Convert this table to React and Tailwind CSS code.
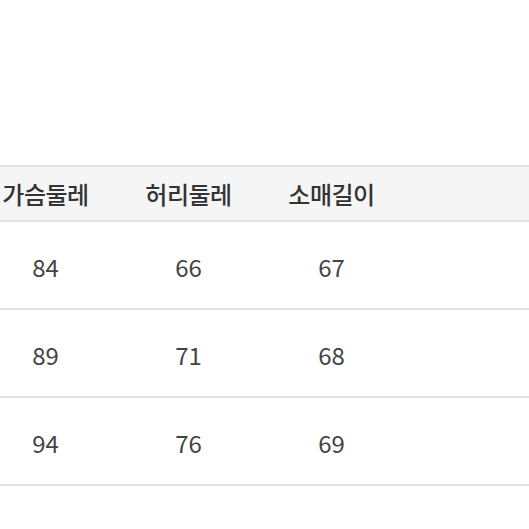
const headers = ['가슴둘레', '허리둘레', '소매길이', ''];
const rows = [
  ['84', '66', '67', ''],
  ['89', '71', '68', ''],
  ['94', '76', '69', ''],
];

export default function App() {
  return (
    <div className="w-[529px] h-[529px] overflow-hidden bg-white font-['Noto_Sans_CJK_KR',sans-serif]">
      <div className="pt-[165px] -ml-[26px] w-[600px]">
        {/* Header */}
        <div className="grid grid-cols-[143px_143px_143px_171px] h-[57px] bg-[#f5f5f5] border-y-2 border-[#e4e4e4] items-center">
          {headers.map((h, i) => (
            <div key={i} className="text-center text-[24px] font-medium text-[#333] tracking-[-0.5px]">
              {h}
            </div>
          ))}
        </div>

        {/* Body */}
        {rows.map((row, r) => (
          <div
            key={r}
            className="grid grid-cols-[143px_143px_143px_171px] h-[88px] border-b-2 border-[#e4e4e4] items-center"
          >
            {row.map((c, i) => (
              <div key={i} className="text-center text-[24px] text-[#444] pt-[3px]">
                {c}
              </div>
            ))}
          </div>
        ))}
      </div>
    </div>
  );
}
